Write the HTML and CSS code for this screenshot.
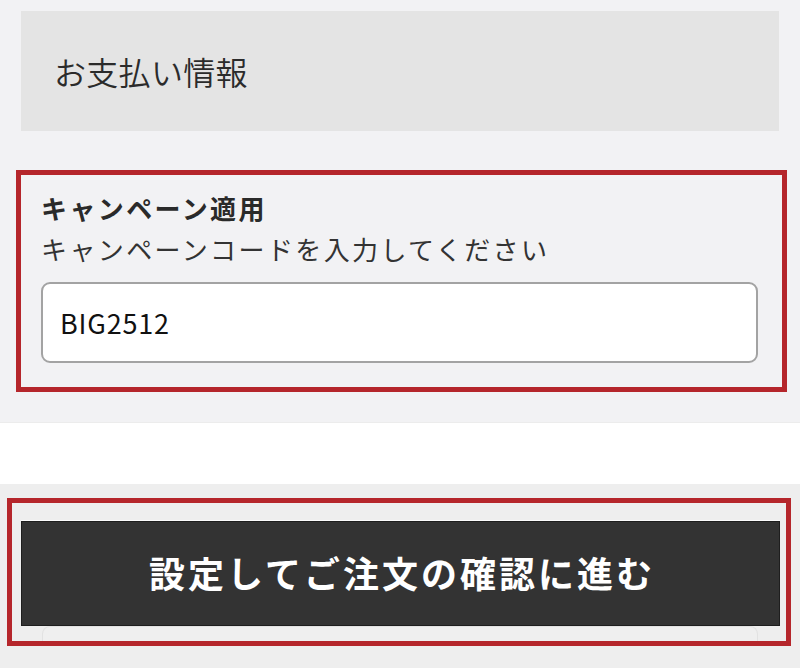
FILE: index.html
```html
<!DOCTYPE html>
<html lang="ja">
<head>
<meta charset="utf-8">
<title>お支払い情報</title>
<link rel="stylesheet" href="styles.css">
</head>
<body>
<div class="page">
  <section class="payment">
    <div class="pay-head"><h2 class="pay-title">お支払い情報</h2></div>
    <div class="campaign">
      <h3 class="campaign-title">キャンペーン適用</h3>
      <p class="campaign-note">キャンペーンコードを入力してください</p>
      <div class="code-input">BIG2512</div>
    </div>
  </section>
  <div class="spacer"></div>
  <section class="submit">
    <div class="submit-box">
      <button class="submit-btn" type="button">設定してご注文の確認に進む</button>
      <div class="peek"></div>
    </div>
  </section>
</div>
</body>
</html>
```

FILE: styles.css
```css
* { box-sizing: border-box; }
html, body { margin: 0; padding: 0; }
body {
  font-family: "Noto Sans CJK JP", "Noto Sans", sans-serif;
  color: #333;
  background: #eeeeee;
  width: 800px;
  height: 668px;
  overflow: hidden;
}
.page { display: flex; flex-direction: column; }

.payment {
  background: #f2f2f4;
  padding: 11px 0 30px;
}
.pay-head {
  margin: 0 21px;
  height: 120px;
  background: #e4e4e4;
  display: flex;
  align-items: center;
  padding-left: 33px;
}
.pay-title {
  margin: 0;
  font-size: 32px;
  font-weight: 350;
  letter-spacing: 0.3px;
  color: #2b2b2b;
  line-height: 1;
}
.campaign {
  margin: 39px 0 0 16px;
  width: 771px;
  border: 5px solid #b5262b;
  padding: 12px 24px 24px 20px;
}
.campaign-title {
  margin: 0;
  font-size: 26px;
  font-weight: 700;
  letter-spacing: 2.4px;
  line-height: 41px;
  color: #2a2a2a;
}
.campaign-note {
  margin: 0;
  font-size: 26px;
  font-weight: 400;
  letter-spacing: 2.4px;
  line-height: 41px;
  color: #333;
}
.code-input {
  margin-top: 13px;
  height: 81px;
  background: #fff;
  border: 2px solid #a3a3a3;
  border-radius: 9px;
  display: flex;
  align-items: center;
  padding: 0 0 0 17px;
  font-size: 27px;
  letter-spacing: 0.8px;
  color: #111;
}

.spacer { height: 62px; background: #fff; border-top: 1px solid #ececec; }

.submit {
  background: #eeeeee;
  padding-top: 14px;
  flex: 1;
}
.submit-box {
  margin-left: 7px;
  width: 784px;
  border: 5px solid #b5262b;
  padding: 18px 0 0 9px;
}
.submit-btn {
  display: flex;
  align-items: center;
  justify-content: center;
  width: 759px;
  height: 105px;
  margin: 0;
  background: #333333;
  border: 1px solid #1e1e1e;
  box-shadow: 0 -1px 0 #fbfbfb;
  color: #fff;
  font-family: "Noto Sans CJK JP", "Noto Sans", sans-serif;
  font-size: 36px;
  font-weight: 700;
  letter-spacing: 3px;
  padding: 0 0 4px 3px;
}
.peek {
  margin-left: 21px;
  width: 716px;
  height: 15px;
  border: 1px solid #e2e2e2;
  border-bottom: none;
  border-radius: 8px 8px 0 0;
  background: #efefef;
}
```
